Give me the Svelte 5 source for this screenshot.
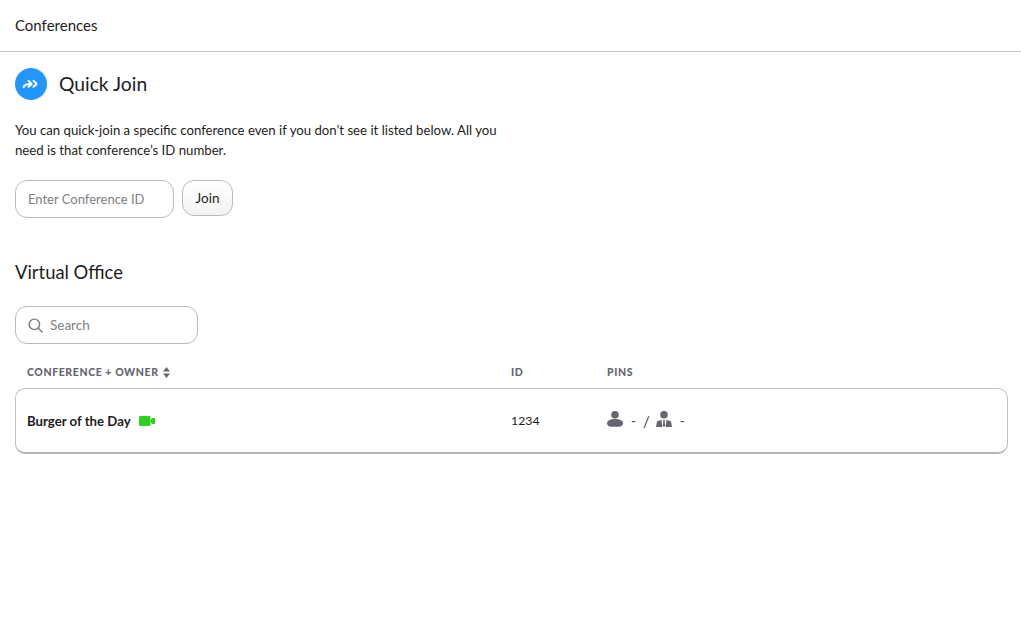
<script>
  const rows = [{ name: 'Burger of the Day', id: '1234' }];
</script>

<div class="page">
  <header class="topbar">Conferences</header>
  <main class="content">
    <section class="quick">
      <div class="title-row">
        <span class="badge">
          <svg width="18" height="12" viewBox="0 0 18 12" aria-hidden="true">
            <path d="M1.600 9.200C2.200 6.800 4 5.900 8 5.900" fill="none" stroke="#fff" stroke-width="2" stroke-linecap="round"/>
            <path d="M6.500 2.800l3.200 3.100-3.200 2.900" fill="none" stroke="#fff" stroke-width="2" stroke-linecap="round" stroke-linejoin="round"/>
            <path d="M11.500 2.800l3.200 3.100-3.200 2.900" fill="none" stroke="#fff" stroke-width="2" stroke-linecap="round" stroke-linejoin="round"/>
          </svg>
        </span>
        <h2>Quick Join</h2>
      </div>
      <p>You can quick-join a specific conference even if you don’t see it listed below. All you need is that conference’s ID number.</p>
      <div class="join">
        <input class="field conf" placeholder="Enter Conference ID" />
        <button>Join</button>
      </div>
    </section>

    <h2 class="vo">Virtual Office</h2>
    <div class="field search">
      <svg width="15" height="15" viewBox="0 0 16 16" aria-hidden="true">
        <circle cx="6.800" cy="6.800" r="5.600" fill="none" stroke="#7a7a80" stroke-width="1.500"/>
        <path d="M11 11l4 4" stroke="#7a7a80" stroke-width="1.500" stroke-linecap="round"/>
      </svg>
      <span>Search</span>
    </div>

    <div class="cols head">
      <div class="th">CONFERENCE + OWNER
        <svg class="sort" width="7" height="11" viewBox="0 0 7 11" aria-hidden="true">
          <path d="M3.500 0L7 4.400H0z" fill="#66666f"/>
          <path d="M3.500 11L0 6.600h7z" fill="#66666f"/>
        </svg>
      </div>
      <div class="th">ID</div>
      <div class="th">PINS</div>
    </div>

    {#each rows as row}
      <div class="cols row">
        <div class="name">
          <strong>{row.name}</strong>
          <svg width="16" height="10" viewBox="0 0 16 10" aria-hidden="true">
            <rect x="0" y="0" width="11.500" height="10" rx="1.200" fill="#2fd01f"/>
            <path d="M11.500 3.500L13.500 2h2.500v6h-2.500l-2-1.500z" fill="#2fd01f"/>
          </svg>
        </div>
        <div class="num">{row.id}</div>
        <div class="pins">
          <svg width="16" height="16" viewBox="0 0 16 16" aria-hidden="true">
            <circle cx="8" cy="3.800" r="3.800" fill="#66666f"/>
            <path d="M0 12.500C0 9.500 3 8 8 8s8 1.500 8 4.500c0 2-2 3.200-4 3.200H4c-2 0-4-1.200-4-3.200z" fill="#66666f"/>
          </svg>
          <span class="dash">-</span>
          <span class="slash">/</span>
          <svg width="16" height="16" viewBox="0 0 16 16" aria-hidden="true">
            <circle cx="8" cy="3.800" r="3.800" fill="#66666f"/>
            <path d="M0 16L1 10.500 5.500 8.800 6.300 16zM16 16L15 10.500 10.500 8.800 9.700 16zM7 9h2l-.3 1.500.7 4L8 16l-1.400-1.500.7-4z" fill="#66666f"/>
          </svg>
          <span class="dash">-</span>
        </div>
      </div>
    {/each}
  </main>
</div>

<style>
  :global(body) {
    margin: 0;
    background: #fff;
    color: #1d1d21;
    font-family: Lato, "Noto Sans", sans-serif;
  }
  .page { width: 1021px; min-height: 640px; }
  .topbar {
    height: 52px;
    box-sizing: border-box;
    border-bottom: 1px solid #c4c4c8;
    padding: 15px 15px 0;
    font-size: 15px;
    line-height: 20px;
  }
  .content { padding: 0 13px 0 15px; }
  .title-row { display: flex; align-items: center; gap: 12px; padding-top: 16px; }
  .title-row h2 { font-size: 19.300px; margin-bottom: 1px; }
  .badge {
    width: 32px; height: 32px; border-radius: 50%;
    background: #2196ff;
    display: flex; align-items: center; justify-content: center;
  }
  h2 { margin: 0; font-weight: 400; font-size: 18.400px; line-height: 28px; }
  p { margin: 20px 0 0; width: 490px; font-size: 13.200px; line-height: 20px; }
  .join { display: flex; gap: 8px; margin-top: 20px; align-items: flex-start; }
  .field {
    box-sizing: border-box;
    border: 1px solid #b9b9bf;
    border-radius: 12px;
    background: #fff;
    font: inherit;
    font-size: 13.500px;
    outline: none;
  }
  .conf { width: 159px; height: 38px; padding: 0 12px; font-size: 13px; }
  .conf::placeholder { color: #808086; opacity: 1; }
  button {
    width: 51px; height: 36px;
    border: 1px solid #b9b9bf;
    border-radius: 12px;
    background: linear-gradient(#fff, #f2f2f3);
    font: inherit;
    font-size: 13.500px;
    color: #1d1d21;
    padding: 0;
  }
  .vo { margin-top: 40px; }
  .search {
    width: 183px; height: 38px; margin-top: 20px;
    display: flex; align-items: center; gap: 7px; padding-left: 12px;
    color: #808086;
  }
  .cols { display: grid; grid-template-columns: 484px 96px 1fr; padding-left: 12px; }
  .head { margin-top: 16px; height: 24px; align-items: center; }
  .th {
    font-size: 10.500px; font-weight: 900; letter-spacing: 0.600px; color: #66666f;
    display: flex; align-items: center; gap: 4px;
  }
  .row {
    height: 66px; box-sizing: border-box; align-items: center;
    border: 1px solid #c0c0c5; border-bottom: 2px solid #b4b4b9;
    border-radius: 10px;
    padding-left: 11px;
    font-size: 13.200px;
    margin-top: 4px;
  }
  .name { display: flex; align-items: center; gap: 8px; }
  strong { font-weight: 700; }
  .num { font-size: 12.300px; }
  .pins { display: flex; align-items: center; gap: 8px; color: #444; }
  .slash { font-size: 15px; margin: 0 -2px 0 -1px; }
  .pins svg { margin-top: -3px; }
</style>
